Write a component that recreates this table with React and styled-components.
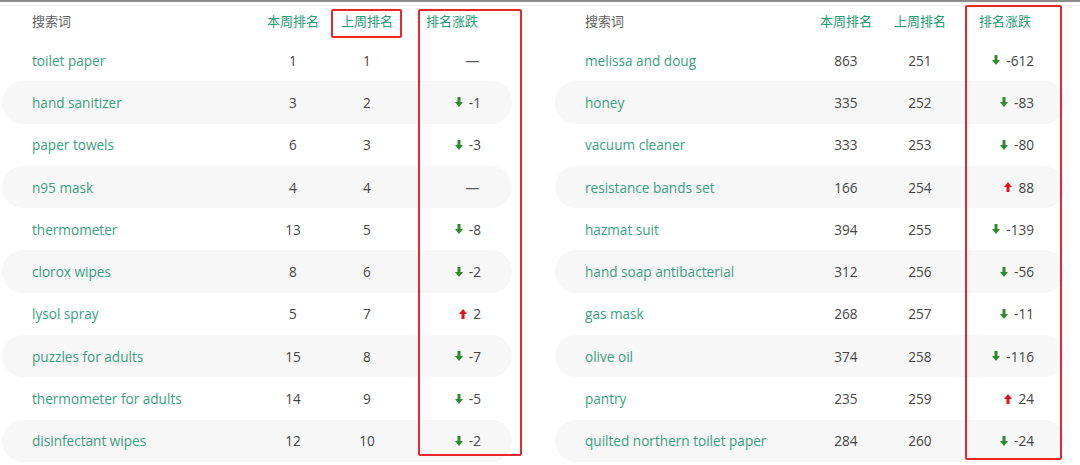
import React from 'react'
import styled, { createGlobalStyle } from 'styled-components'

const GlobalStyle = createGlobalStyle`
	html, body {
		margin: 0;
		padding: 0;
		background: #ffffff;
	}
	body {
		font-family: "Open Sans", "Noto Sans CJK SC", sans-serif;
	}
`

const Page = styled.div`
	position: relative;
	width: 1080px;
	height: 465px;
	overflow: hidden;
	background: #fff;
	border-top: 2px solid #8c8c8c;
	box-sizing: border-box;
	&::before {
		content: '';
		position: absolute;
		left: 0;
		right: 0;
		top: 3px;
		height: 1px;
		background: #eeeeee;
	}
`

const Tables = styled.div`
	display: flex;
	gap: 43px;
	padding-left: 2px;
`

const Table = styled.div`
	width: 510px;
	display: flex;
	flex-direction: column;
`

const Row = styled.div`
	display: grid;
	grid-template-columns: 254px 74px 74px 96px;
	align-items: center;
	height: 42.3px;
	border-radius: 21px;
	background: ${p => (p.$striped ? '#f7f7f7' : 'transparent')};
`

const HeadRow = styled(Row)`
	height: 37px;
`

const HeadCell = styled.div`
	font-family: "Noto Sans CJK SC", sans-serif;
	font-size: 13px;
	font-weight: 400;
	color: ${p => (p.$muted ? '#5f5f5f' : '#1f9a72')};
	text-align: ${p => (p.$muted ? 'left' : 'center')};
	padding-left: ${p => (p.$muted ? '30px' : '0')};
`

const Keyword = styled.div`
	font-size: 13.6px;
	color: #3a9f80;
	padding-left: 30px;
	white-space: nowrap;
`

const Num = styled.div`
	font-size: 13.6px;
	color: #444;
	text-align: center;
`

const Change = styled.div`
	display: flex;
	justify-content: flex-end;
	align-items: center;
	gap: 6px;
	padding-right: 19px;
	font-size: 13.6px;
	color: #444;
`

const Dash = styled.span`
	color: #555;
	padding-right: 2px;
`

const RedBox = styled.div`
	position: absolute;
	border: 2px solid #e8262b;
	border-radius: 2px;
	box-sizing: border-box;
	pointer-events: none;
`

const Arrow = ({ up }) => (
	<svg width='8' height='10' viewBox='0 0 8 10'>
		{up ? (
			<path d='M4 0 L8 5 L5.5 5 L5.5 10 L2.5 10 L2.5 5 L0 5 Z' fill='#e0121b' />
		) : (
			<path d='M2.5 0 L5.5 0 L5.5 5 L8 5 L4 10 L0 5 L2.5 5 Z' fill='#2c8c2c' />
		)}
	</svg>
)

const left = [
	['toilet paper', 1, 1, 0],
	['hand sanitizer', 3, 2, -1],
	['paper towels', 6, 3, -3],
	['n95 mask', 4, 4, 0],
	['thermometer', 13, 5, -8],
	['clorox wipes', 8, 6, -2],
	['lysol spray', 5, 7, 2],
	['puzzles for adults', 15, 8, -7],
	['thermometer for adults', 14, 9, -5],
	['disinfectant wipes', 12, 10, -2],
]

const right = [
	['melissa and doug', 863, 251, -612],
	['honey', 335, 252, -83],
	['vacuum cleaner', 333, 253, -80],
	['resistance bands set', 166, 254, 88],
	['hazmat suit', 394, 255, -139],
	['hand soap antibacterial', 312, 256, -56],
	['gas mask', 268, 257, -11],
	['olive oil', 374, 258, -116],
	['pantry', 235, 259, 24],
	['quilted northern toilet paper', 284, 260, -24],
]

const RankTable = ({ rows }) => (
	<Table>
		<HeadRow>
			<HeadCell $muted>搜索词</HeadCell>
			<HeadCell>本周排名</HeadCell>
			<HeadCell>上周排名</HeadCell>
			<HeadCell>排名涨跌</HeadCell>
		</HeadRow>
		{rows.map(([kw, cur, prev, diff], i) => (
			<Row key={kw} $striped={i % 2 === 1}>
				<Keyword>{kw}</Keyword>
				<Num>{cur}</Num>
				<Num>{prev}</Num>
				<Change>
					{diff === 0 ? (
						<Dash>—</Dash>
					) : (
						<>
							<Arrow up={diff > 0} />
							<span>{diff}</span>
						</>
					)}
				</Change>
			</Row>
		))}
	</Table>
)

const App = () => {
	return (
		<Page>
			<GlobalStyle />
			<Tables>
				<RankTable rows={left} />
				<RankTable rows={right} />
			</Tables>
			<RedBox style={{ left: 331, top: 7, width: 71, height: 29 }} />
			<RedBox style={{ left: 418, top: 7, width: 104, height: 447 }} />
			<RedBox style={{ left: 965, top: 3, width: 97, height: 455 }} />
		</Page>
	)
}

export default App
